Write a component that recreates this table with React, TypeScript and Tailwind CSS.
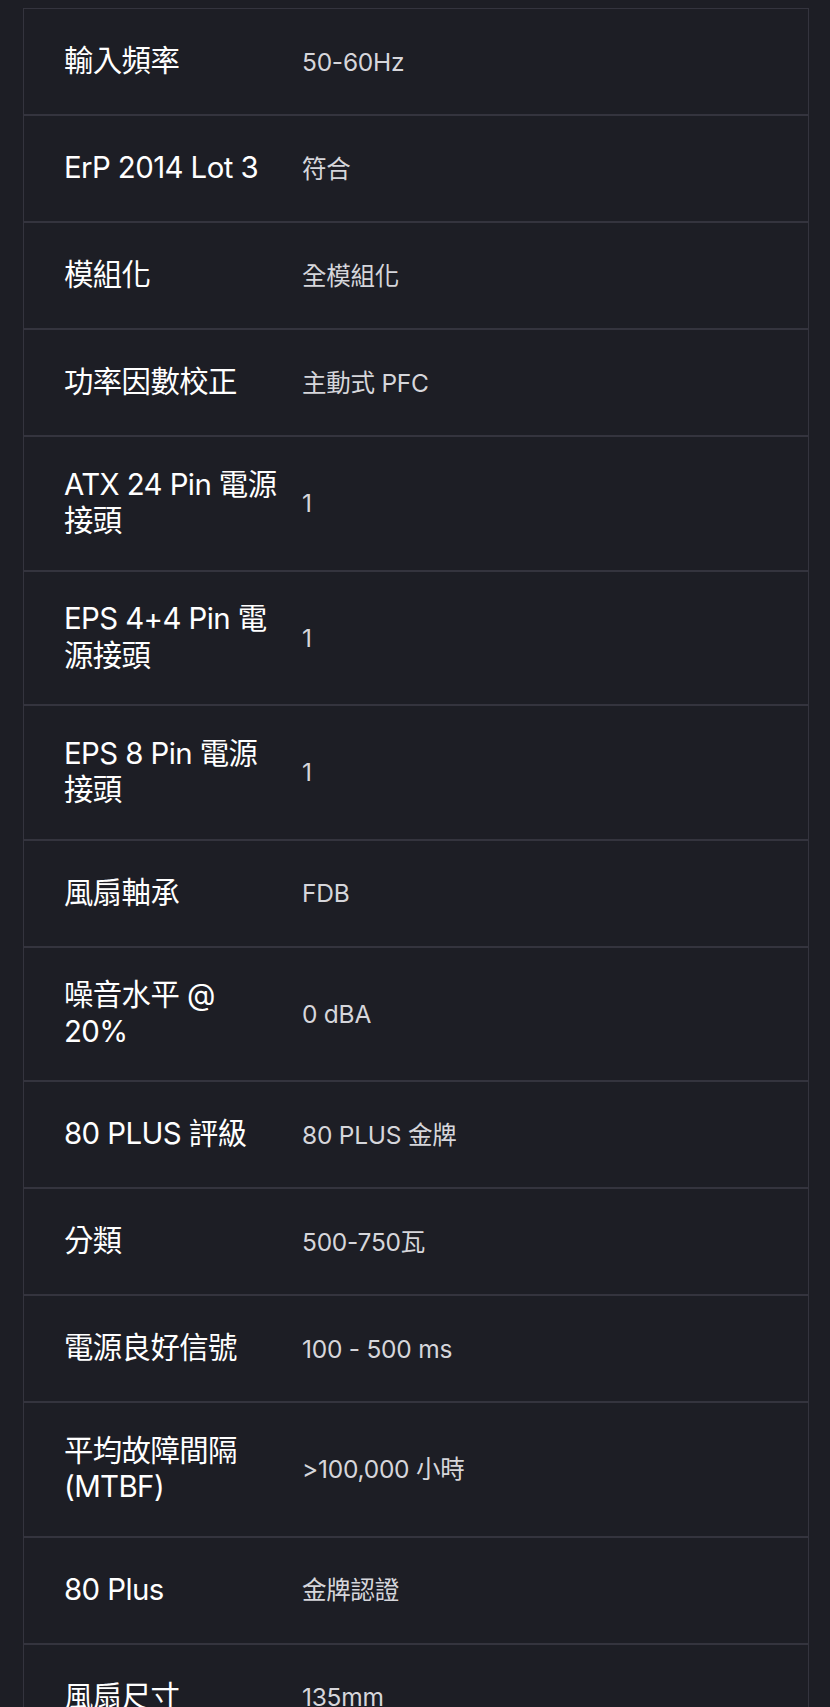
const specs: { label: string; value: string }[] = [
  { label: "輸入頻率", value: "50-60Hz" },
  { label: "ErP 2014 Lot 3", value: "符合" },
  { label: "模組化", value: "全模組化" },
  { label: "功率因數校正", value: "主動式 PFC" },
  { label: "ATX 24 Pin 電源接頭", value: "1" },
  { label: "EPS 4+4 Pin 電源接頭", value: "1" },
  { label: "EPS 8 Pin 電源接頭", value: "1" },
  { label: "風扇軸承", value: "FDB" },
  { label: "噪音水平 @ 20%", value: "0 dBA" },
  { label: "80 PLUS 評級", value: "80 PLUS 金牌" },
  { label: "分類", value: "500-750瓦" },
  { label: "電源良好信號", value: "100 - 500 ms" },
  { label: "平均故障間隔 (MTBF)", value: ">100,000 小時" },
  { label: "80 Plus", value: "金牌認證" },
  { label: "風扇尺寸", value: "135mm" },
];

export default function App() {
  return (
    <div className="min-h-screen bg-[#1d1e25] pt-[8px] font-['Inter','Noto_Sans_CJK_TC',sans-serif]">
      {/* spec table */}
      <div className="ml-[23px] w-[786px] border border-[#34343e]">
        {specs.map((s) => (
          <div
            key={s.label}
            className="flex min-h-[107px] items-center border-b-2 border-[#34343e] py-[29.5px] pl-[40px]"
          >
            <div className="w-[217px] shrink-0 text-[29.4px] font-normal leading-[36.75px] tracking-[-0.02em] text-white">
              {s.label}
            </div>
            <div className="ml-[21px] text-[24.5px] leading-[32px] tracking-[-0.01em] text-[#d6d6db]">
              {s.value}
            </div>
          </div>
        ))}
      </div>
    </div>
  );
}
